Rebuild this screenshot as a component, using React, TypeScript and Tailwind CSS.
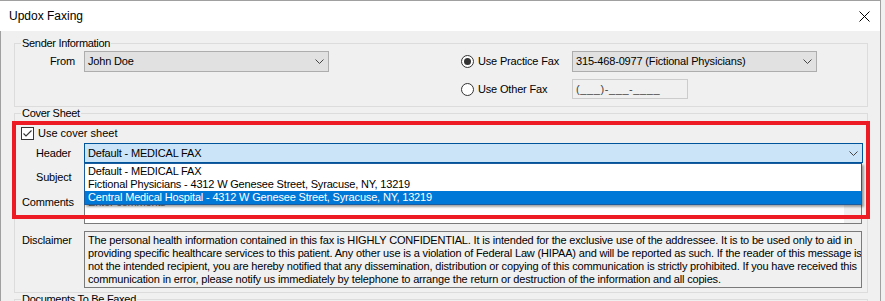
import type { ReactNode } from 'react';

const Chevron = () => (
  <svg width="9" height="5" viewBox="0 0 9 5" className="shrink-0">
    <polyline points="0.5,0.5 4.5,4.5 8.5,0.5" fill="none" stroke="#444" strokeWidth="1" />
  </svg>
);

const Select = ({ value, className }: { value: string; className?: string }) => (
  <div
    className={[
      'h-full flex items-center justify-between pl-[3px] pr-[4px] border border-[#adadad] bg-[#e1e1e1] whitespace-nowrap',
      className || '',
    ].join(' ')}
  >
    <span>{value}</span>
    <Chevron />
  </div>
);

const Radio = ({ checked, label }: { checked?: boolean; label: string }) => (
  <div className="w-[111px] flex items-center gap-[4px] whitespace-nowrap">
    <span className="w-[13px] h-[13px] rounded-full border border-[#333] bg-white flex items-center justify-center shrink-0">
      {checked && <span className="w-[7px] h-[7px] rounded-full bg-[#333]" />}
    </span>
    <span>{label}</span>
  </div>
);

const Group = ({ title, children, className }: { title: string; children?: ReactNode; className?: string }) => (
  <fieldset className={['border border-[#dcdcdc] p-0 m-0 min-w-0', className || ''].join(' ')}>
    <legend className="ml-[6px] px-[1px] leading-[13px] tracking-[-0.3px]">{title}</legend>
    {children}
  </fieldset>
);

const options = [
  'Default - MEDICAL FAX',
  'Fictional Physicians - 4312 W Genesee Street, Syracuse, NY, 13219',
  'Central Medical Hospital - 4312 W Genesee Street, Syracuse, NY, 13219',
];

const disclaimer = [
  'The personal health information contained in this fax is HIGHLY CONFIDENTIAL. It is intended for the exclusive use of the addressee. It is to be used only to aid in',
  'providing specific healthcare services to this patient. Any other use is a violation of Federal Law (HIPAA) and will be reported as such. If the reader of this message is',
  'not the intended recipient, you are hereby notified that any dissemination, distribution or copying of this communication is strictly prohibited. If you have received this',
  'communication in error, please notify us immediately by telephone to arrange the return or destruction of the information and all copies.',
];

export default function App() {
  return (
    <div className="relative w-[885px] h-[301px] overflow-hidden bg-[#f0f0f0] font-['Liberation_Sans',Arial,sans-serif] text-[11px] leading-[13px] text-black">
      <div className="w-[881px] h-full border-t border-r border-[#a0a0a0] flex flex-col">
        {/* title bar */}
        <div className="h-[30px] shrink-0 bg-white flex items-center justify-between pl-[9px] pr-[10px] text-[12px]">
          <span>Updox Faxing</span>
          <svg width="11" height="11" viewBox="0 0 11 11">
            <path d="M0.5 0.5 L10.5 10.5 M10.5 0.5 L0.5 10.5" stroke="#000" strokeWidth="1" fill="none" />
          </svg>
        </div>

        <div className="flex-1 border-l border-[#a0a0a0] pl-[13px] pr-[12px] pt-[6px] tracking-[-0.17px]">
          <Group title="Sender Information">
            <div className="pt-[1px] pb-[7px] flex flex-col gap-[7px]">
              <div className="h-[21px] flex items-center">
                <div className="w-[69px] pl-[35px]">From</div>
                <Select value="John Doe" className="w-[245px]" />
                <div className="w-[132px]" />
                <Radio checked label="Use Practice Fax" />
                <Select value="315-468-0977 (Fictional Physicians)" className="w-[245px]" />
              </div>
              <div className="h-[20px] flex items-center">
                <div className="w-[446px]" />
                <Radio label="Use Other Fax" />
                <div className="w-[116px] h-full border border-[#cccccc] bg-[#f0f0f0] flex items-center pl-[3px] text-[#444] tracking-[0.6px]">
                  (___)-___-____
                </div>
              </div>
            </div>
          </Group>

          <Group title="Cover Sheet">
            <div className="pt-[6px] pb-[4px] flex flex-col">
              <div className="h-[14px] flex items-center pl-[6px] gap-[4px]">
                <span className="w-[13px] h-[13px] border border-[#333] bg-white flex items-center justify-center">
                  <svg width="11" height="11" viewBox="0 0 11 11">
                    <polyline points="1.5,5.5 4,8 9.5,2.5" fill="none" stroke="#333" strokeWidth="1.1" />
                  </svg>
                </span>
                <span className="tracking-normal">Use cover sheet</span>
              </div>

              <div className="mt-[3px] h-[20px] flex items-center">
                <div className="w-[69px] pl-[21px]">Header</div>
                <div className="relative w-[779px] h-full">
                  <div className="h-full flex items-center justify-between pl-[3px] pr-[4px] border border-[#005499] bg-[#cce4f7]">
                    <span>Default - MEDICAL FAX</span>
                    <Chevron />
                  </div>
                  <div className="absolute z-10 top-full left-0 w-[778px] bg-white border border-[#1b5c9e] pt-[1px] shadow-[2px_2px_2px_rgba(0,0,0,0.35)]">
                    {options.map((o, i) => (
                      <div
                        key={o}
                        className={[
                          'h-[13px] leading-[13px] pl-[3px] whitespace-nowrap',
                          i === 2 ? 'bg-[#0078d7] text-white' : '',
                        ].join(' ')}
                      >
                        {o}
                      </div>
                    ))}
                  </div>
                </div>
              </div>

              <div className="mt-[4px] h-[21px] flex items-center">
                <div className="w-[69px] pl-[21px]">Subject</div>
                <div className="w-[778px] h-full border border-[#7a7a7a] bg-white" />
              </div>

              <div className="mt-[3px] h-[33px] flex items-start">
                <div className="w-[69px] pl-[7px] pt-[5px]">Comments</div>
                <div className="w-[778px] h-full border border-[#7a7a7a] bg-white flex">
                  <div className="flex-1 pl-[3px] pt-[4px] text-[#6d6d6d]">Enter comments</div>
                  <div className="w-[17px] bg-[#f0f0f0]" />
                </div>
              </div>

              <div className="mt-[7px] flex items-start">
                <div className="w-[69px] pl-[7px] pt-[3px]">Disclaimer</div>
                <div className="w-[778px] h-[57px] border border-[#7a7a7a] bg-[#f0f0f0] pl-[3px] pt-[2px] overflow-hidden">
                  {disclaimer.map((l) => (
                    <div key={l} className="whitespace-nowrap">{l}</div>
                  ))}
                </div>
              </div>
            </div>
          </Group>

          <Group title="Documents To Be Faxed" className="h-[40px]" />
        </div>
      </div>

      {/* red highlight annotation */}
      <div className="absolute left-[12px] top-[121px] w-[858px] h-[98px] border-4 border-[#ed1c24] pointer-events-none" />
    </div>
  );
}
